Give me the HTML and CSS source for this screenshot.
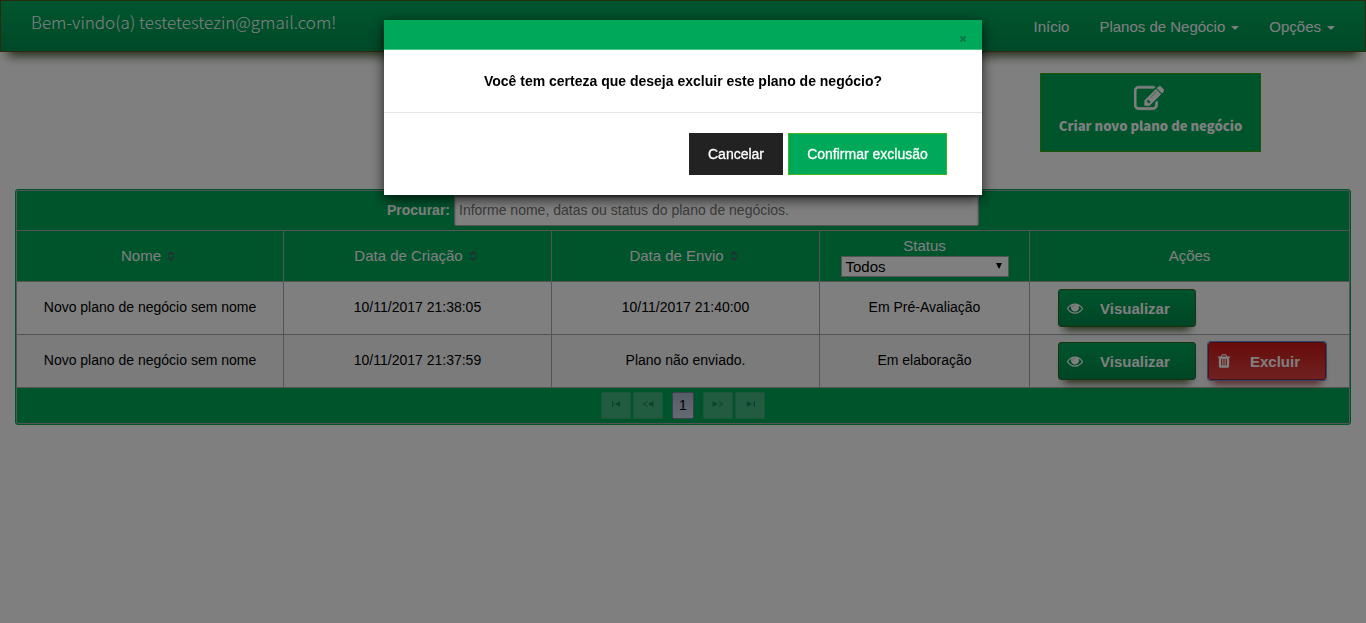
FILE: index.html
```html
<!DOCTYPE html>
<html lang="pt-BR">
<head>
<meta charset="utf-8">
<title>Planos de Negócio</title>
<link rel="stylesheet" href="styles.css">
</head>
<body>
<svg class="defs" width="0" height="0">
  <symbol id="edit" viewBox="0 0 1792 1792"><path d="M888 1184l116-116-152-152-116 116v56h96v96h56zm440-720q-16-16-33 1l-350 350q-17 17-1 33t33-1l350-350q17-17 1-33zm80 594v190q0 119-84.500 203.500t-203.500 84.500h-832q-119 0-203.500-84.500t-84.500-203.500v-832q0-119 84.500-203.500t203.500-84.500h832q63 0 117 25 15 7 18 23 3 17-9 29l-49 49q-14 14-32 8-23-6-45-6h-832q-66 0-113 47t-47 113v832q0 66 47 113t113 47h832q66 0 113-47t47-113v-126q0-13 9-22l64-64q15-15 35-7t20 29zm-96-738l288 288-672 672h-288v-288zm444 132l-92 92-288-288 92-92q28-28 68-28t68 28l152 152q28 28 28 68t-28 68z" stroke="currentColor" stroke-width="40"/></symbol>
  <symbol id="eye" viewBox="0 0 1792 1792"><path d="M1664 960q-152-236-381-353 61 104 61 225 0 185-131.500 316.500t-316.500 131.500-316.500-131.500-131.500-316.500q0-121 61-225-229 117-381 353 133 205 333.500 326.500t434.500 121.500 434.500-121.500 333.500-326.500zm-720-384q0-20-14-34t-34-14q-125 0-214.500 89.500t-89.500 214.500q0 20 14 34t34 14 34-14 14-34q0-86 61-147t147-61q20 0 34-14t14-34zm848 384q0 34-20 69-140 230-376.500 368.500t-499.500 138.500-499.500-139-376.500-368q-20-35-20-69t20-69q140-229 376.500-368t499.500-139 499.500 139 376.500 368q20 35 20 69z"/><circle cx="896" cy="832" r="400" opacity=".55"/></symbol>
  <symbol id="trash" viewBox="0 0 1792 1792"><path d="M704 1376v-704q0-14-9-23t-23-9h-64q-14 0-23 9t-9 23v704q0 14 9 23t23 9h64q14 0 23-9t9-23zm256 0v-704q0-14-9-23t-23-9h-64q-14 0-23 9t-9 23v704q0 14 9 23t23 9h64q14 0 23-9t9-23zm256 0v-704q0-14-9-23t-23-9h-64q-14 0-23 9t-9 23v704q0 14 9 23t23 9h64q14 0 23-9t9-23zm-544-992h448l-48-117q-7-9-17-11h-317q-10 2-17 11zm928 32v64q0 14-9 23t-23 9h-96v948q0 83-47 143.500t-113 60.500h-832q-66 0-113-58.500t-47-141.500v-952h-96q-14 0-23-9t-9-23v-64q0-14 9-23t23-9h309l70-167q15-37 54-63t79-26h320q40 0 79 26t54 63l70 167h309q14 0 23 9t9 23z"/></symbol>
  <symbol id="sort" viewBox="0 0 8 10"><path d="M1 4L4 1L7 4M1 6L4 9L7 6" fill="none" stroke="currentColor" stroke-width="1.500"/></symbol>
  <symbol id="first" viewBox="0 0 10 6"><path d="M0 0h1.500v6H0zM9 0v6L3 3z"/></symbol>
  <symbol id="prev" viewBox="0 0 12 6"><path d="M5.500 .500L1 3l4.500 2.500" fill="none" stroke="currentColor"/><path d="M11.500 0v6L6 3z"/></symbol>
</svg>

<header class="navbar">
  <div class="welcome">Bem-vindo(a) testetestezin@gmail.com!</div>
  <nav class="menu">
    <a>Início</a>
    <a>Planos de Negócio<i class="caret"></i></a>
    <a>Opções<i class="caret"></i></a>
  </nav>
</header>

<main class="content">
  <div class="toolbar">
    <button class="create"><svg class="create-icon"><use href="#edit"/></svg><span>Criar novo plano de negócio</span></button>
  </div>

  <section class="table">
    <div class="table-inner">
      <div class="search"><label>Procurar:</label><div class="search-input">Informe nome, datas ou status do plano de negócios.</div></div>
      <div class="row head">
        <div class="cell">Nome<svg class="sort"><use href="#sort"/></svg></div>
        <div class="cell">Data de Criação<svg class="sort"><use href="#sort"/></svg></div>
        <div class="cell">Data de Envio<svg class="sort"><use href="#sort"/></svg></div>
        <div class="cell status"><span>Status</span><div class="select"><span>Todos</span><i class="arrow"></i></div></div>
        <div class="cell">Ações</div>
      </div>
      <div class="row">
        <div class="cell">Novo plano de negócio sem nome</div>
        <div class="cell">10/11/2017 21:38:05</div>
        <div class="cell">10/11/2017 21:40:00</div>
        <div class="cell">Em Pré-Avaliação</div>
        <div class="cell actions"><button class="btn view"><svg class="icon"><use href="#eye"/></svg><span>Visualizar</span></button></div>
      </div>
      <div class="row even">
        <div class="cell">Novo plano de negócio sem nome</div>
        <div class="cell">10/11/2017 21:37:59</div>
        <div class="cell">Plano não enviado.</div>
        <div class="cell">Em elaboração</div>
        <div class="cell actions"><button class="btn view"><svg class="icon"><use href="#eye"/></svg><span>Visualizar</span></button><button class="btn delete"><svg class="icon"><use href="#trash"/></svg><span>Excluir</span></button></div>
      </div>
      <div class="pager">
        <span class="page-btn"><svg class="pi"><use href="#first"/></svg></span>
        <span class="page-btn"><svg class="pi wide"><use href="#prev"/></svg></span>
        <span class="page-num">1</span>
        <span class="page-btn"><svg class="pi wide flip"><use href="#prev"/></svg></span>
        <span class="page-btn"><svg class="pi flip"><use href="#first"/></svg></span>
      </div>
    </div>
  </section>
</main>

<div class="overlay">
  <div class="modal">
    <div class="modal-head"><svg class="close" viewBox="0 0 6 6"><path d="M.5 .5L5.500 5.500M5.500 .5L.5 5.500"/></svg></div>
    <div class="modal-body">Você tem certeza que deseja excluir este plano de negócio?</div>
    <div class="modal-foot"><button class="m-btn cancel">Cancelar</button><button class="m-btn confirm">Confirmar exclusão</button></div>
  </div>
</div>
</body>
</html>
```
FILE: styles.css
```css
* { box-sizing: border-box; }
body {
  margin: 0;
  height: 623px;
  overflow: hidden;
  background: #fff;
  color: #000;
  font: 14px/20px "Liberation Sans", Arial, sans-serif;
}
.defs { display: block; height: 0; }
svg { fill: currentColor; display: block; flex: none; }
button { font: inherit; padding: 0; margin: 0; }

.navbar {
  height: 52px;
  border: 1px solid #56561c;
  background: linear-gradient(#00ab5d, #009250);
  box-shadow: 0 12px 10px -8px #465a30;
  display: flex;
  justify-content: space-between;
  align-items: flex-start;
  color: #fff;
}
.welcome {
  padding: 8px 0 0 30px;
  font: 300 17.030px/25px "Noto Sans CJK SC", "Noto Sans CJK JP", sans-serif;
  white-space: nowrap;
}
.menu {
  display: flex;
  gap: 30px;
  padding: 15px 30px 0 0;
  font-size: 15px;
  line-height: 22px;
}
.menu a { display: flex; align-items: center; }
.caret {
  margin: 1px 0 0 6px;
  border: 4px solid transparent;
  border-top-color: #fff;
  border-bottom: 0;
}

.content { padding: 21px 15px 0; }
.toolbar {
  display: flex;
  justify-content: flex-end;
  padding-right: 90px;
  height: 116px;
}
.create {
  width: 221px;
  height: 79px;
  border: 1px solid #3fa80a;
  background: #00a859;
  color: #fff;
  display: flex;
  flex-direction: column;
  align-items: center;
  padding-top: 9px;
  font: 900 13.050px/20px "Noto Sans CJK SC", "Noto Sans CJK JP", sans-serif;
  white-space: nowrap;
}
.create-icon { width: 30px; height: 30px; margin: 1px 0 2px -4px; }

.table {
  height: 236px;
  border: 1px solid #00a859;
  border-radius: 3px;
  background: #00a859;
}
.table-inner { border: 1px solid #a8a8ac; height: 100%; border-radius: 2px; }
.search {
  height: 39px;
  display: flex;
  justify-content: center;
  color: #fff;
  font-weight: bold;
  line-height: 38px;
}
.search-input {
  width: 525px;
  height: 32px;
  margin: 3px 0 0 4px;
  padding-left: 4px;
  border: 1px solid #a8a8a8;
  border-radius: 2px;
  background: #fff;
  color: #757575;
  font-weight: normal;
  line-height: 30px;
  box-shadow: inset 0 2px 2px #8f8f8f;
}
.row {
  display: grid;
  grid-template-columns: 267px 268px 268px 210px 1fr;
  height: 53px;
  border-top: 1px solid #a8a8ac;
  background: #fff;
}
.row.head { height: 51px; background: #00a859; color: #fff; font-size: 15px; }
.row.even { background: #f6f7f9; }
.cell {
  display: flex;
  align-items: center;
  justify-content: center;
  padding-bottom: 2px;
  border-right: 1px solid #a8a8ac;
}
.cell:last-child { border-right: 0; }
.head .cell { padding-bottom: 0; }
.sort { width: 8px; height: 10px; margin: 0 4px 0 6px; color: #4a5773; }
.head .cell.status { flex-direction: column; line-height: 16px; padding: 3px 0 0; }
.select {
  width: 168px;
  height: 21px;
  margin-top: 2px;
  padding: 0 6px 0 4px;
  border: 1px solid #a9a9a9;
  background: #fff;
  color: #000;
  display: flex;
  align-items: center;
  justify-content: space-between;
}
.arrow { border: 3.500px solid transparent; border-top: 6px solid #000; border-bottom: 0; margin-top: -2px; }
.cell.actions { justify-content: flex-start; padding: 0 0 0 28px; gap: 12px; }

.btn {
  height: 38px;
  border-radius: 3px;
  color: #fff;
  font-weight: bold;
  font-size: 15px;
  display: flex;
  align-items: center;
}
.btn .icon { width: 16px; height: 16px; }
.btn span { padding-top: 1px; }
.btn.view {
  width: 138px;
  padding-left: 8px;
  border: 1px solid #36651c;
  background: linear-gradient(#00a85a, #008c4c);
  box-shadow: 0 9px 8px -6px #465a30;
}
.view span { margin-left: 17px; }
.btn.delete {
  width: 118px;
  padding-left: 7px;
  border: 1px solid #8c2029;
  background: linear-gradient(#d01818, #df4242);
  box-shadow: 0 0 0 1px #698bd0, 0 9px 8px -5px #b14444;
}
.delete span { margin-left: 18px; }

.pager {
  height: 36px;
  border-top: 1px solid #a8a8ac;
  display: flex;
  justify-content: center;
  align-items: center;
  gap: 2px;
}
.page-btn {
  width: 30px;
  height: 27px;
  border: 1px solid #3aab77;
  border-radius: 2px;
  background: #42b680;
  color: #1d8357;
  display: flex;
  justify-content: center;
  padding-top: 8px;
}
.pi { width: 9px; height: 6px; }
.pi.wide { width: 12px; }
.flip { transform: scaleX(-1); }
.page-num {
  width: 22px;
  height: 27px;
  margin: 0 7px;
  border: 1px solid #7983a5;
  border-radius: 2px;
  background: linear-gradient(#a9b9cb, #cbd6e4);
  text-align: center;
  line-height: 25px;
}

.overlay {
  position: fixed;
  inset: 0;
  background: rgba(0, 0, 0, .5);
  display: flex;
  justify-content: center;
  align-items: flex-start;
  padding-top: 20px;
}
.modal {
  width: 598px;
  height: 175px;
  background: #fff;
  box-shadow: 0 4px 12px rgba(0, 0, 0, .75);
}
.modal-head {
  height: 30px;
  background: #00a859;
  border-bottom: 1px solid #4dc28b;
  display: flex;
  justify-content: flex-end;
  padding: 16px 16px 0 0;
}
.close { width: 6px; height: 6px; }
.close path { fill: none; stroke: #14704a; stroke-width: 1.700; }
.modal-body {
  height: 63px;
  border-bottom: 1px solid #e5e5e5;
  text-align: center;
  font-weight: bold;
  line-height: 62px;
}
.modal-foot {
  height: 82px;
  display: flex;
  justify-content: flex-end;
  gap: 5px;
  padding: 20px 35px 0 0;
}
.m-btn { height: 42px; color: #fff; -webkit-text-stroke: .3px #fff; }
.cancel { width: 94px; border: 1px solid #222; background: #222; }
.confirm { width: 159px; border: 1px solid #3fb519; background: #00a859; }
```
